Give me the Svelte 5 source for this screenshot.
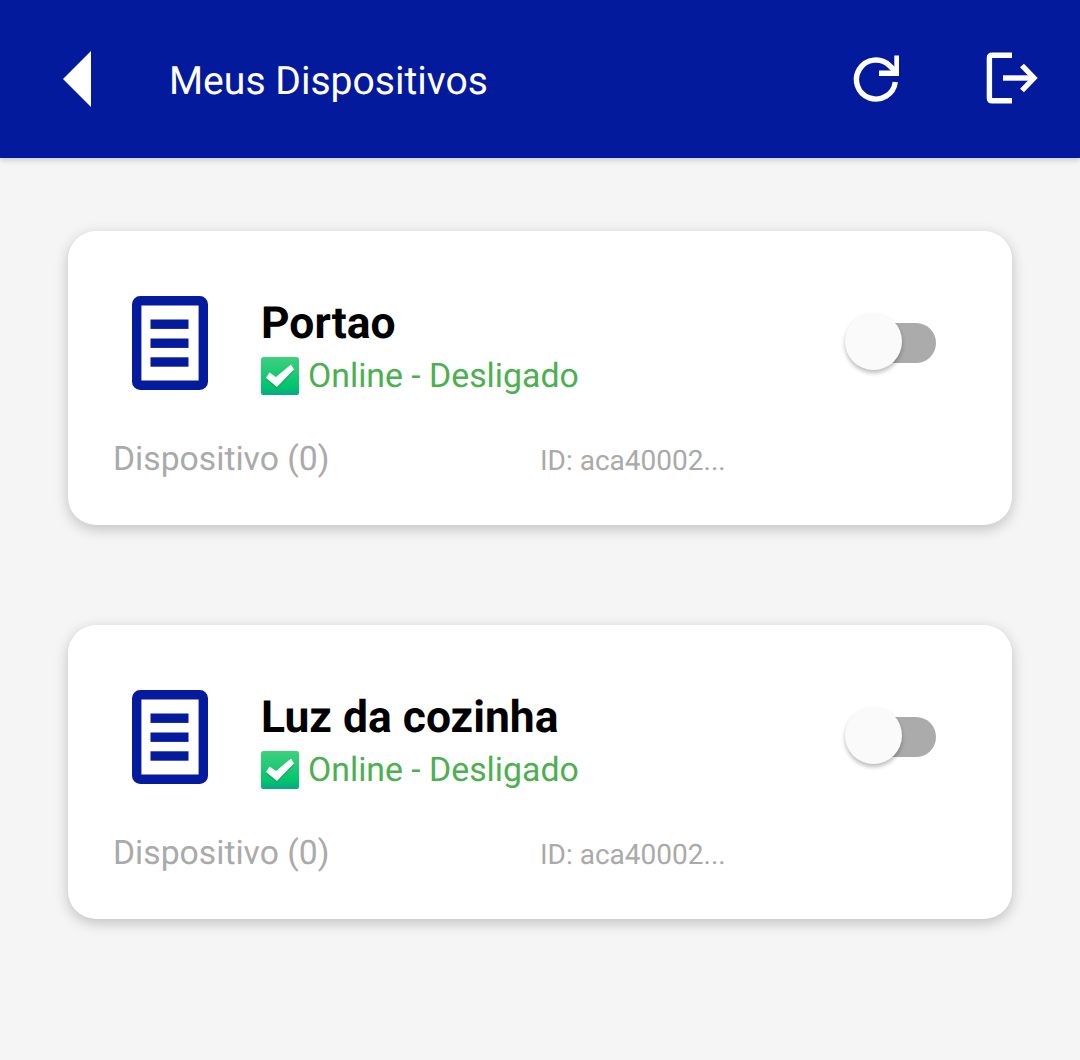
<script>
	let devices = [
		{ name: 'Portao', status: 'Online - Desligado', label: 'Dispositivo (0)', id: 'ID: aca40002...' },
		{ name: 'Luz da cozinha', status: 'Online - Desligado', label: 'Dispositivo (0)', id: 'ID: aca40002...' }
	];
</script>

<div class="page">
	<header class="topbar">
		<svg class="back" width="28" height="56" viewBox="0 0 28 56">
			<path d="M28 0V56L0 28Z" fill="#fff" />
		</svg>
		<h1>Meus Dispositivos</h1>
		<svg class="refresh" width="48" height="48" viewBox="0 0 48 48" fill="none" stroke="#fff" stroke-width="5.4">
			<path d="M44.300 27A19.500 19.500 0 1 1 38.800 10.800L46 18" />
			<path d="M46 0.500V18.200H28" />
		</svg>
		<svg class="logout" width="52" height="52" viewBox="0 0 52 52" fill="none" stroke="#fff" stroke-width="5.4">
			<path d="M26 3.200H6.200Q3.400 3.200 3.400 6V46Q3.400 48.800 6.200 48.800H26" />
			<path d="M17 26H47" />
			<path d="M36 13.500L48 26L36 38.500" />
		</svg>
	</header>

	<main class="list">
		{#each devices as d}
			<section class="card">
				<div class="top">
					<svg class="doc" width="76" height="94" viewBox="0 0 76 94">
						<rect x="4.700" y="4.700" width="66.600" height="84.600" rx="3.500" fill="none" stroke="#041b9e" stroke-width="9.400" />
						<rect x="18.500" y="23.500" width="38" height="9.400" fill="#041b9e" />
						<rect x="18.500" y="42.500" width="38" height="9.400" fill="#041b9e" />
						<rect x="18.500" y="61.300" width="38" height="9.400" fill="#041b9e" />
					</svg>
					<div class="info">
						<div class="name">{d.name}</div>
						<div class="status">
							<svg class="check" width="38" height="38" viewBox="0 0 38 38">
								<defs>
									<linearGradient id="boxfill" x1="0" y1="0" x2="0" y2="1">
										<stop offset="0" stop-color="#3fd07f" />
										<stop offset="0.8" stop-color="#00c46c" />
										<stop offset="1" stop-color="#0aa58c" />
									</linearGradient>
								</defs>
								<rect width="38" height="38" rx="2.500" fill="url(#boxfill)" />
								<path d="M5 22.500L8.500 17L15 21.500L30 9L33 14L16 31.500Z" fill="#0a7a4a" opacity="0.45" />
								<path d="M5 21L8.500 15.500L15 20L30 7.500L33 12.500L16 30Z" fill="#fff" />
							</svg>
							<span>{d.status}</span>
						</div>
					</div>
					<div class="switch">
						<div class="track"></div>
						<div class="thumb"></div>
					</div>
				</div>
				<div class="bottom">
					<span class="label">{d.label}</span>
					<span class="devid">{d.id}</span>
				</div>
			</section>
		{/each}
	</main>
</div>

<style>
	:global(body) {
		background: #f5f5f5;
	}

	.page {
		height: 1060px;
		background: #f5f5f5;
		font-family: Roboto, 'Liberation Sans', sans-serif;
		text-rendering: geometricPrecision;
	}

	.topbar {
		display: flex;
		align-items: center;
		height: 158px;
		padding: 0 42px 0 63px;
		box-sizing: border-box;
		background: #041a9c;
		box-shadow: 0 2px 6px rgba(0, 0, 0, 0.18);
	}

	.back {
		margin-right: 78px;
	}

	.topbar h1 {
		flex: 1;
		margin: 4px 0 0;
		color: #fff;
		font-size: 39.1px;
		font-weight: 400;
		line-height: 42px;
	}

	.refresh {
		margin: -1px 87px 0 0;
	}

	.logout {
		margin-top: -3px;
	}

	.list {
		display: flex;
		flex-direction: column;
		gap: 100px;
		padding: 73px 68px 0;
	}

	.card {
		height: 294px;
		padding: 65px 76px 0 64px;
		box-sizing: border-box;
		background: #fff;
		border-radius: 28px;
		box-shadow: 0 4px 14px rgba(0, 0, 0, 0.22);
	}

	.top {
		display: flex;
		align-items: flex-start;
	}

	.doc {
		margin-right: 53px;
	}

	.info {
		flex: 1;
		margin-top: 1px;
	}

	.name {
		font-size: 44.4px;
		font-weight: 700;
		line-height: 52px;
		color: #000;
	}

	.status {
		display: flex;
		align-items: center;
		gap: 9px;
		margin-top: 6px;
		font-size: 33.8px;
		line-height: 44px;
		color: #4caf50;
	}

	.check {
		margin-top: -2px;
	}

	.switch {
		position: relative;
		width: 92px;
		height: 58px;
		margin-top: 17px;
	}

	.track {
		position: absolute;
		left: 14px;
		top: 10px;
		width: 78px;
		height: 40px;
		border-radius: 20px;
		background: #ababab;
	}

	.thumb {
		position: absolute;
		left: 1px;
		top: 0;
		width: 57px;
		height: 57px;
		border-radius: 50%;
		background: #fafafa;
		box-shadow: 0 3px 4px rgba(0, 0, 0, 0.26);
	}

	.bottom {
		display: flex;
		align-items: center;
		margin: 39px 0 0 -19px;
		color: #aaa;
	}

	.label {
		width: 427px;
		font-size: 33.7px;
		line-height: 44px;
	}

	.devid {
		font-size: 28px;
	}
</style>
